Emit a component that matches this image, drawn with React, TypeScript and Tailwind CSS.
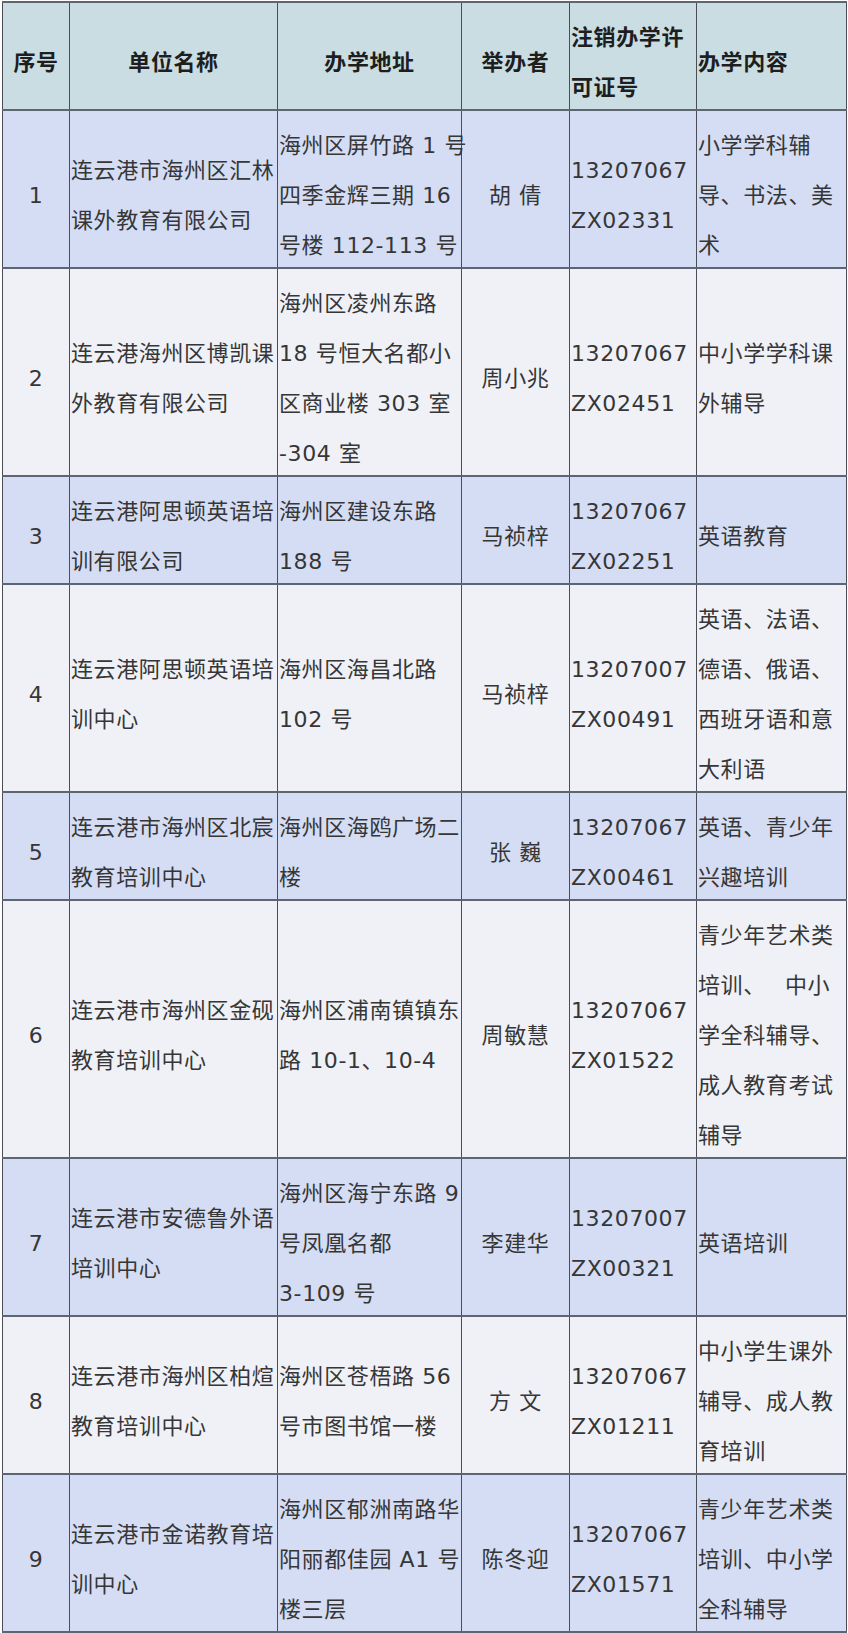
import React from "react";

type Row = {
  no: string;
  name: string[];
  addr: string[];
  holder: string;
  lic: string[];
  content: string[];
};

const rows: Row[] = [
  {
    no: "1",
    name: ["连云港市海州区汇林", "课外教育有限公司"],
    addr: ["海州区屏竹路 1 号", "四季金辉三期 16", "号楼 112-113 号"],
    holder: "胡 倩",
    lic: ["13207067", "ZX02331"],
    content: ["小学学科辅", "导、书法、美", "术"],
  },
  {
    no: "2",
    name: ["连云港海州区博凯课", "外教育有限公司"],
    addr: ["海州区凌州东路", "18 号恒大名都小", "区商业楼 303 室", "-304 室"],
    holder: "周小兆",
    lic: ["13207067", "ZX02451"],
    content: ["中小学学科课", "外辅导"],
  },
  {
    no: "3",
    name: ["连云港阿思顿英语培", "训有限公司"],
    addr: ["海州区建设东路", "188 号"],
    holder: "马祯梓",
    lic: ["13207067", "ZX02251"],
    content: ["英语教育"],
  },
  {
    no: "4",
    name: ["连云港阿思顿英语培", "训中心"],
    addr: ["海州区海昌北路", "102 号"],
    holder: "马祯梓",
    lic: ["13207007", "ZX00491"],
    content: ["英语、法语、", "德语、俄语、", "西班牙语和意", "大利语"],
  },
  {
    no: "5",
    name: ["连云港市海州区北宸", "教育培训中心"],
    addr: ["海州区海鸥广场二", "楼"],
    holder: "张 巍",
    lic: ["13207067", "ZX00461"],
    content: ["英语、青少年", "兴趣培训"],
  },
  {
    no: "6",
    name: ["连云港市海州区金砚", "教育培训中心"],
    addr: ["海州区浦南镇镇东", "路 10-1、10-4"],
    holder: "周敏慧",
    lic: ["13207067", "ZX01522"],
    content: ["青少年艺术类", "培训、\u3000 中小", "学全科辅导、", "成人教育考试", "辅导"],
  },
  {
    no: "7",
    name: ["连云港市安德鲁外语", "培训中心"],
    addr: ["海州区海宁东路 9", "号凤凰名都", "3-109 号"],
    holder: "李建华",
    lic: ["13207007", "ZX00321"],
    content: ["英语培训"],
  },
  {
    no: "8",
    name: ["连云港市海州区柏煊", "教育培训中心"],
    addr: ["海州区苍梧路 56", "号市图书馆一楼"],
    holder: "方 文",
    lic: ["13207067", "ZX01211"],
    content: ["中小学生课外", "辅导、成人教", "育培训"],
  },
  {
    no: "9",
    name: ["连云港市金诺教育培", "训中心"],
    addr: ["海州区郁洲南路华", "阳丽都佳园 A1 号", "楼三层"],
    holder: "陈冬迎",
    lic: ["13207067", "ZX01571"],
    content: ["青少年艺术类", "培训、中小学", "全科辅导"],
  },
];

function Lines({ lines, className = "" }: { lines: string[]; className?: string }) {
  return (
    <div className={`pt-[10px] mb-[-4px] whitespace-pre ${className}`}>
      {lines.map((l, i) => (
        <div key={i}>{l}</div>
      ))}
    </div>
  );
}

const cell = "p-0 align-middle border-x border-x-[#4a4d55] border-y-2 border-y-[#5d6472]";

export default function App() {
  return (
    <div className="min-h-[1633px] bg-white pt-[1px] pl-[2px]">
      <table className="table-fixed border-collapse w-[844px] font-['DejaVu_Sans','Noto_Sans_CJK_SC',sans-serif] text-[22px] leading-[50px] tracking-[0.6px] text-[#363636]">
        <colgroup>
          <col className="w-[67px]" />
          <col className="w-[208px]" />
          <col className="w-[184px]" />
          <col className="w-[108px]" />
          <col className="w-[127px]" />
          <col className="w-[150px]" />
        </colgroup>
        <thead>
          <tr className="bg-[#c9dde2] font-bold text-[#1e1e1e]">
            <th className={cell}>
              <Lines lines={["序号"]} className="text-center" />
            </th>
            <th className={cell}>
              <Lines lines={["单位名称"]} className="text-center" />
            </th>
            <th className={cell}>
              <Lines lines={["办学地址"]} className="text-center" />
            </th>
            <th className={cell}>
              <Lines lines={["举办者"]} className="text-center" />
            </th>
            <th className={cell}>
              <Lines lines={["注销办学许", "可证号"]} className="text-left pl-[1px]" />
            </th>
            <th className={cell}>
              <Lines lines={["办学内容"]} className="text-left pl-[1px]" />
            </th>
          </tr>
        </thead>
        <tbody>
          {rows.map((r, i) => (
            <tr key={r.no} className={i % 2 === 0 ? "bg-[#d5ddf4]" : "bg-[#eff1f6]"}>
              <td className={cell}>
                <Lines lines={[r.no]} className="text-center" />
              </td>
              <td className={cell}>
                <Lines lines={r.name} className="pl-[1px]" />
              </td>
              <td className={cell}>
                <Lines lines={r.addr} className="pl-[1px]" />
              </td>
              <td className={cell}>
                <Lines lines={[r.holder]} className="text-center" />
              </td>
              <td className={cell}>
                <Lines lines={r.lic} className="pl-[1px]" />
              </td>
              <td className={cell}>
                <Lines lines={r.content} className="pl-[1px]" />
              </td>
            </tr>
          ))}
        </tbody>
      </table>
    </div>
  );
}
